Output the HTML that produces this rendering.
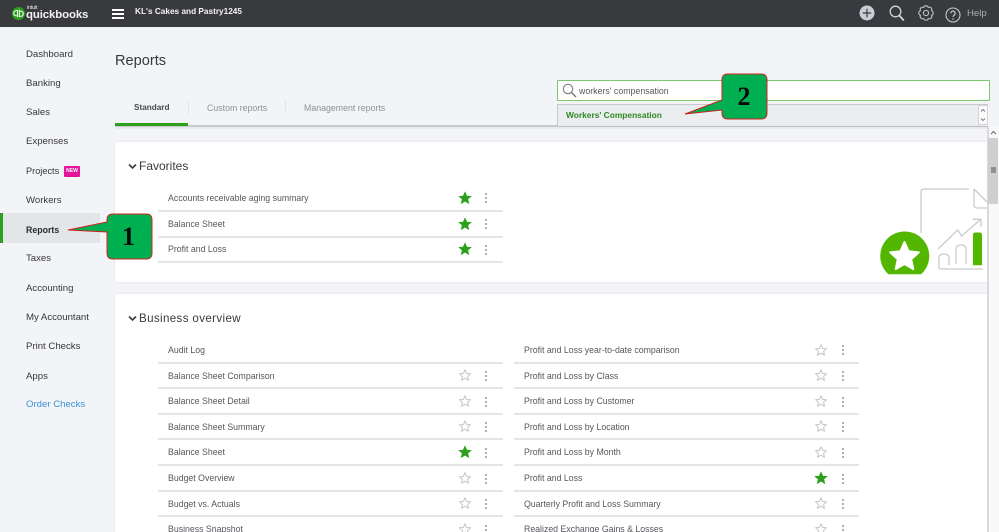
<!DOCTYPE html>
<html><head><meta charset="utf-8">
<style>
html,body{margin:0;padding:0;width:999px;height:532px;overflow:hidden}
body{position:relative;background:#f3f4f8;font-family:"Liberation Sans",sans-serif;color:#393a3d}
#w{position:absolute;left:0;top:0;width:999px;height:532px;overflow:hidden;filter:blur(.3px)}
.a{position:absolute;white-space:nowrap}
.nav{left:26px;font-size:9.6px;line-height:12px;color:#36373a}
.r{font-size:8.75px;line-height:12px;color:#55575c}
.l{position:absolute;height:2px;background:#e3e5e9}
svg.s{position:absolute;width:15px;height:15px;transform:translate(.5px,.5px)}
.d{position:absolute;width:2.4px;height:2.4px;border-radius:50%;background:#94979d;box-shadow:0 4px 0 #94979d,0 8px 0 #94979d}
</style></head><body><div id="w">
<svg width="0" height="0" style="position:absolute"><defs>
<symbol id="f" viewBox="0 0 16 16"><path d="M8 1.6l1.9 4.3 4.6.4-3.5 3 1.1 4.6L8 11.5l-4.1 2.4 1.1-4.6-3.5-3 4.6-.4z" fill="#2ca01c" stroke="#2ca01c" stroke-width=".6"/></symbol>
<symbol id="e" viewBox="0 0 16 16"><path d="M8 2.4l1.7 3.9 4.2.4-3.2 2.8 1 4.1L8 11.4l-3.7 2.2 1-4.1-3.2-2.8 4.2-.4z" fill="#fff" stroke="#c4c7cd" stroke-width="1.1" stroke-linejoin="round"/></symbol>
</defs></svg>

<!-- top bar -->
<div class="a" style="left:0;top:0;width:999px;height:27px;background:#393a3d"></div>
<svg class="a" style="left:12px;top:7px" width="13" height="13" viewBox="0 0 13 13"><circle cx="6.5" cy="6.5" r="6.5" fill="#2ca01c"/><path d="M5.6 3.6H4.3a2.6 2.6 0 0 0 0 5.2h.6M5.6 3v7.2M7.4 9.4H8.700a2.6 2.6 0 0 0 0-5.2h-.6M7.4 10V2.8" fill="none" stroke="#fff" stroke-width="1"/></svg>
<div class="a" style="left:27px;top:5px;font-size:5px;line-height:6px;color:#fff">intuit</div>
<div class="a" style="left:26px;top:9px;font-size:11.4px;line-height:12px;font-weight:bold;color:#f2f2f2;letter-spacing:-.1px">quickbooks</div>
<div class="a" style="left:112px;top:9px;width:12px;height:2px;background:#fff;box-shadow:0 4px 0 #fff,0 8px 0 #fff"></div>
<div class="a" style="left:135px;top:6px;font-size:8.250px;line-height:12px;color:#f4f4f4;font-weight:bold">KL's Cakes and Pastry1245</div>
<svg class="a" style="left:859px;top:5px" width="16" height="16" viewBox="0 0 16 16"><circle cx="8" cy="8" r="7.5" fill="#c8ccd4"/><path d="M8 3.8v8.4M3.800 8h8.400" stroke="#393a3d" stroke-width="1.2"/></svg>
<svg class="a" style="left:888px;top:5px" width="17" height="17" viewBox="0 0 17 17"><circle cx="7.500" cy="6.500" r="5.300" fill="none" stroke="#d0d3d9" stroke-width="1.300"/><path d="M11.300 10.500l4.500 5" stroke="#d0d3d9" stroke-width="1.800"/></svg>
<svg class="a" style="left:918px;top:5px" width="16" height="16" viewBox="0 0 16 16"><circle cx="8" cy="8" r="2.600" fill="none" stroke="#c4c7cd" stroke-width="1"/><path d="M13.540 5.700A2.400 2.400 0 0 1 13.540 10.300A2.400 2.400 0 0 1 10.300 13.540A2.400 2.400 0 0 1 5.700 13.540A2.400 2.400 0 0 1 2.460 10.300A2.400 2.400 0 0 1 2.460 5.700A2.400 2.400 0 0 1 5.700 2.460A2.400 2.400 0 0 1 10.300 2.460A2.400 2.400 0 0 1 13.540 5.700Z" fill="none" stroke="#c4c7cd" stroke-width="1"/></svg>
<svg class="a" style="left:945px;top:7px" width="16" height="16" viewBox="0 0 16 16"><circle cx="8" cy="8" r="7" fill="none" stroke="#c4c7cd" stroke-width="1.100"/><path d="M5.800 6.300a2.200 2.200 0 1 1 3.400 1.800c-.8.500-1.200 1-1.200 1.900" fill="none" stroke="#c4c7cd" stroke-width="1.200"/><circle cx="8" cy="12" r=".8" fill="#c4c7cd"/></svg>
<div class="a" style="left:967px;top:8px;font-size:9.6px;line-height:12px;color:#a9acb2">Help</div>

<!-- side nav -->
<div class="a nav" style="top:48.500px">Dashboard</div>
<div class="a nav" style="top:77.500px">Banking</div>
<div class="a nav" style="top:107px">Sales</div>
<div class="a nav" style="top:136px">Expenses</div>
<div class="a nav" style="top:164.500px;font-size:9.200px">Projects</div>
<div class="a" style="left:64px;top:166px;width:16px;height:10.500px;background:#e3149b;border-radius:1px;color:#fff;font-size:5px;line-height:10px;text-align:center;font-weight:bold">NEW</div>
<div class="a nav" style="top:194.500px">Workers</div>
<div class="a" style="left:0;top:213px;width:100px;height:30px;background:#e4e5e9"></div>
<div class="a" style="left:0;top:213px;width:3px;height:30px;background:#2ca01c"></div>
<div class="a nav" style="top:223.500px;font-weight:bold;color:#2b2c2f;font-size:8.800px">Reports</div>
<div class="a nav" style="top:253px">Taxes</div>
<div class="a nav" style="top:282.500px">Accounting</div>
<div class="a nav" style="top:311.500px">My Accountant</div>
<div class="a nav" style="top:341px">Print Checks</div>
<div class="a nav" style="top:370.500px">Apps</div>
<div class="a nav" style="top:398.500px;color:#3d94d6">Order Checks</div>

<!-- header -->
<div class="a" style="left:115px;top:52.500px;font-size:14.600px;line-height:17px;color:#393a3d">Reports</div>
<div class="a" style="left:134px;top:101.500px;font-size:8.200px;line-height:12px;font-weight:bold;color:#4a4b4f">Standard</div>
<div class="a" style="left:207px;top:102px;font-size:8.800px;line-height:12px;color:#8d9096">Custom reports</div>
<div class="a" style="left:304px;top:102px;font-size:8.800px;line-height:12px;color:#8d9096">Management reports</div>
<div class="a" style="left:188px;top:100px;width:1px;height:14px;background:#e3e5e9"></div>
<div class="a" style="left:285px;top:100px;width:1px;height:14px;background:#e3e5e9"></div>
<div class="a" style="left:115px;top:125px;width:873px;height:2px;background:#c9cace"></div>
<div class="a" style="left:115px;top:123px;width:73px;height:3px;background:#2ca01c"></div>
<div class="a" style="left:115px;top:127px;width:873px;height:2px;background:#e9eaee"></div>

<!-- cards -->
<div class="a" style="left:115px;top:142px;width:873px;height:140px;background:#fff;box-shadow:0 0 2px #d8dade"></div>
<div class="a" style="left:115px;top:294px;width:873px;height:238px;background:#fff;box-shadow:0 0 2px #d8dade"></div>

<!-- favorites -->
<svg class="a" style="left:128px;top:163px" width="9" height="7" viewBox="0 0 9 7"><path d="M1 1.500l3.500 3.500L8 1.500" fill="none" stroke="#393a3d" stroke-width="1.600"/></svg>
<div class="a" style="left:139px;top:159px;font-size:12px;line-height:15px;color:#393a3d">Favorites</div>
<div class="a r" style="left:168px;top:192px">Accounts receivable aging summary</div><div class="l" style="left:158px;top:210px;width:345px"></div>
<div class="a r" style="left:168px;top:218px">Balance Sheet</div><div class="l" style="left:158px;top:236px;width:345px"></div>
<div class="a r" style="left:168px;top:243px">Profit and Loss</div><div class="l" style="left:158px;top:261px;width:345px"></div>
<svg class="s" style="left:457px;top:190px"><use href="#f"/></svg><div class="d" style="left:485px;top:193px"></div>
<svg class="s" style="left:457px;top:216px"><use href="#f"/></svg><div class="d" style="left:485px;top:219px"></div>
<svg class="s" style="left:457px;top:241px"><use href="#f"/></svg><div class="d" style="left:485px;top:245px"></div>

<!-- illustration -->
<svg class="a" style="left:0;top:0" width="999" height="532" viewBox="0 0 999 532">
<g fill="none" stroke="#c9cbd1" stroke-width="1.300">
<path d="M921 233V192q0-3 3-3h45"/>
<path d="M974 189v16q0 3 3 3h11M974 189l14 14"/>
<path d="M938 249L957.700 230l4 6L980.700 219.300"/>
<path d="M973 219.300h8v7.400"/>
<path d="M939 265V258q0-4 5-4t5 4v7"/>
<path d="M956 264V249q0-4 5-4t5 4v15"/>
<path d="M939 265v2q0 2 2 2h42"/>
</g>
<path d="M888.500 274.300A24.500 24.500 0 1 1 921 274.300Z" fill="#53b700"/>
<path d="M904.500 242L908.600 251.300 918.800 252.400 911.200 259.200 913.300 269.100 904.500 264 895.700 269.100 897.800 259.200 890.200 252.400 900.400 251.300Z" fill="#fff" stroke="#fff" stroke-width="2" stroke-linejoin="round"/>
<path d="M973 265.300V235q0-2.500 2.500-2.500h4q2.500 0 2.500 2.500v30.300z" fill="#53b700"/>
</svg>

<!-- business overview -->
<svg class="a" style="left:128px;top:315px" width="9" height="7" viewBox="0 0 9 7"><path d="M1 1.500l3.500 3.500L8 1.500" fill="none" stroke="#393a3d" stroke-width="1.600"/></svg>
<div class="a" style="left:139px;top:311px;font-size:11.600px;line-height:15px;color:#393a3d;letter-spacing:.35px">Business overview</div>

<div class="a r" style="left:168px;top:344px">Audit Log</div><div class="l" style="left:158px;top:362px;width:345px"></div>
<div class="a r" style="left:168px;top:370px">Balance Sheet Comparison</div><div class="l" style="left:158px;top:387px;width:345px"></div>
<div class="a r" style="left:168px;top:395px">Balance Sheet Detail</div><div class="l" style="left:158px;top:413px;width:345px"></div>
<div class="a r" style="left:168px;top:421px">Balance Sheet Summary</div><div class="l" style="left:158px;top:438px;width:345px"></div>
<div class="a r" style="left:168px;top:446px">Balance Sheet</div><div class="l" style="left:158px;top:464px;width:345px"></div>
<div class="a r" style="left:168px;top:472px">Budget Overview</div><div class="l" style="left:158px;top:490px;width:345px"></div>
<div class="a r" style="left:168px;top:498px">Budget vs. Actuals</div><div class="l" style="left:158px;top:515px;width:345px"></div>
<div class="a r" style="left:168px;top:523px">Business Snapshot</div>

<svg class="s" style="left:457px;top:367px"><use href="#e"/></svg><div class="d" style="left:485px;top:371px"></div>
<svg class="s" style="left:457px;top:393px"><use href="#e"/></svg><div class="d" style="left:485px;top:397px"></div>
<svg class="s" style="left:457px;top:418px"><use href="#e"/></svg><div class="d" style="left:485px;top:422px"></div>
<svg class="s" style="left:457px;top:444px"><use href="#f"/></svg><div class="d" style="left:485px;top:448px"></div>
<svg class="s" style="left:457px;top:470px"><use href="#e"/></svg><div class="d" style="left:485px;top:474px"></div>
<svg class="s" style="left:457px;top:495px"><use href="#e"/></svg><div class="d" style="left:485px;top:499px"></div>
<svg class="s" style="left:457px;top:521px"><use href="#e"/></svg><div class="d" style="left:485px;top:525px"></div>

<div class="a r" style="left:524px;top:344px">Profit and Loss year-to-date comparison</div><div class="l" style="left:514px;top:362px;width:345px"></div>
<div class="a r" style="left:524px;top:370px">Profit and Loss by Class</div><div class="l" style="left:514px;top:387px;width:345px"></div>
<div class="a r" style="left:524px;top:395px">Profit and Loss by Customer</div><div class="l" style="left:514px;top:413px;width:345px"></div>
<div class="a r" style="left:524px;top:421px">Profit and Loss by Location</div><div class="l" style="left:514px;top:438px;width:345px"></div>
<div class="a r" style="left:524px;top:446px">Profit and Loss by Month</div><div class="l" style="left:514px;top:464px;width:345px"></div>
<div class="a r" style="left:524px;top:472px">Profit and Loss</div><div class="l" style="left:514px;top:490px;width:345px"></div>
<div class="a r" style="left:524px;top:498px">Quarterly Profit and Loss Summary</div><div class="l" style="left:514px;top:515px;width:345px"></div>
<div class="a r" style="left:524px;top:523px">Realized Exchange Gains &amp; Losses</div>

<svg class="s" style="left:813px;top:342px"><use href="#e"/></svg><div class="d" style="left:842px;top:345px"></div>
<svg class="s" style="left:813px;top:367px"><use href="#e"/></svg><div class="d" style="left:842px;top:371px"></div>
<svg class="s" style="left:813px;top:393px"><use href="#e"/></svg><div class="d" style="left:842px;top:397px"></div>
<svg class="s" style="left:813px;top:418px"><use href="#e"/></svg><div class="d" style="left:842px;top:422px"></div>
<svg class="s" style="left:813px;top:444px"><use href="#e"/></svg><div class="d" style="left:842px;top:448px"></div>
<svg class="s" style="left:813px;top:470px"><use href="#f"/></svg><div class="d" style="left:842px;top:474px"></div>
<svg class="s" style="left:813px;top:495px"><use href="#e"/></svg><div class="d" style="left:842px;top:499px"></div>
<svg class="s" style="left:813px;top:521px"><use href="#e"/></svg><div class="d" style="left:842px;top:525px"></div>

<!-- scrollbar -->
<div class="a" style="left:988px;top:127px;width:11px;height:405px;background:#f9f9f9"></div>
<div class="a" style="left:987px;top:127px;width:2px;height:405px;background:#d9d9d9"></div>
<div class="a" style="left:988px;top:138px;width:10px;height:66px;background:#cfcfcf"></div>
<div class="a" style="left:990.500px;top:167px;width:5px;height:6px;background:#8f8f8f"></div>
<svg class="a" style="left:988px;top:128px" width="11" height="9" viewBox="0 0 11 9"><path d="M3 6l2.500-2.500L8 6" fill="none" stroke="#666" stroke-width="1"/></svg>

<!-- search -->
<div class="a" style="left:557px;top:80px;width:431px;height:19px;background:#fff;border:1px solid #7fc76f;border-radius:1px"></div>
<svg class="a" style="left:562px;top:83px" width="15" height="15" viewBox="0 0 15 15"><circle cx="6" cy="6" r="4.700" fill="none" stroke="#7b7e84" stroke-width="1.100"/><path d="M9.500 9.500l4.500 4.500" stroke="#7b7e84" stroke-width="1.500"/></svg>
<div class="a" style="left:579px;top:85px;font-size:8.800px;line-height:12px;color:#55575c">workers' compensation</div>
<div class="a" style="left:557px;top:104px;width:431px;height:22.500px;background:#ecedf0;border-top:1px solid #c8c9cc;border-left:1px solid #c8c9cc;border-bottom:1px solid #bdbec1;box-sizing:border-box"></div>
<div class="a" style="left:566px;top:109px;font-size:8.400px;line-height:12px;font-weight:bold;color:#2c8a1e">Workers' Compensation</div>
<div class="a" style="left:978px;top:105px;width:10px;height:20px;background:#fbfbfb;border:1px solid #d4d4d4;box-sizing:border-box"></div>
<svg class="a" style="left:978px;top:105px" width="10" height="20" viewBox="0 0 10 20"><path d="M3 6.500l2-2 2 2M3 13.500l2 2 2-2" fill="none" stroke="#777" stroke-width=".9"/></svg>

<!-- callouts -->
<svg class="a" style="left:0;top:0" width="999" height="532" viewBox="0 0 999 532">
<path d="M68 230L107 222V220q0-6 6-6h33q6 0 6 6v33q0 6-6 6h-33q-6 0-6-6V232z" fill="#00b050" stroke="#d02020" stroke-width="1"/>
<path d="M685 114L722 100V80q0-6 6-6h33q6 0 6 6v33q0 6-6 6h-33q-6 0-6-6V110z" fill="#00b050" stroke="#d02020" stroke-width="1"/>
<text x="128.500" y="245" text-anchor="middle" font-family="Liberation Serif,serif" font-weight="bold" font-size="26" fill="#0a0a0a">1</text>
<text x="744" y="105" text-anchor="middle" font-family="Liberation Serif,serif" font-weight="bold" font-size="26" fill="#0a0a0a">2</text>
</svg>
</div></body></html>
